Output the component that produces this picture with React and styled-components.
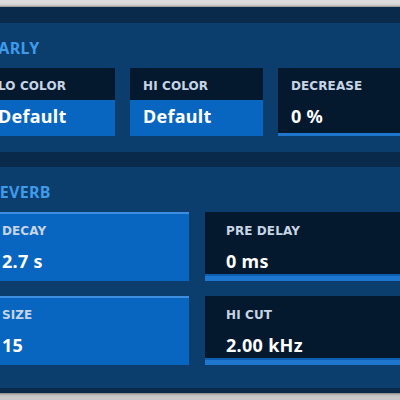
import styled, { createGlobalStyle } from 'styled-components'

const GlobalStyle = createGlobalStyle`
  html, body {
    margin: 0;
    height: 100%;
    overflow: hidden;
    background: linear-gradient(180deg, #dcdcdc 0%, #c9c9c9 100%);
    font-family: "Noto Sans", "DejaVu Sans", sans-serif;
  }
`

const early = [
  { label: 'LO COLOR', value: 'Default', active: true },
  { label: 'HI COLOR', value: 'Default', active: true },
  { label: 'DECREASE', value: '0 %', active: false }
]

const reverb = [
  { label: 'DECAY', value: '2.7 s', active: true },
  { label: 'PRE DELAY', value: '0 ms', active: false },
  { label: 'SIZE', value: '15', active: true },
  { label: 'HI CUT', value: '2.00 kHz', active: false }
]

function App() {
  return (
    <>
      <GlobalStyle />
      <Frame>
        <Section>
          <Heading>EARLY</Heading>
          <EarlyGrid>
            {early.map((p) => (
              <EarlyCard key={p.label}>
                <LabelPart>
                  <Label>{p.label}</Label>
                </LabelPart>
                <ValuePart $active={p.active}>
                  <Value>{p.value}</Value>
                </ValuePart>
              </EarlyCard>
            ))}
          </EarlyGrid>
        </Section>
        <Section $grow>
          <Heading>REVERB</Heading>
          <ReverbGrid>
            {reverb.map((p) => (
              <ReverbCard key={p.label} $active={p.active}>
                <Label>{p.label}</Label>
                <Value>{p.value}</Value>
              </ReverbCard>
            ))}
          </ReverbGrid>
        </Section>
      </Frame>
    </>
  )
}

const Frame = styled.div`
  margin: 7px 0 0 -19px;
  width: 440px;
  height: 386px;
  box-sizing: border-box;
  padding: 16px 0 5px;
  display: flex;
  flex-direction: column;
  gap: 15px;
  background: #0a2a4b;
  box-shadow: 0 0 3px rgba(0, 0, 0, 0.7);
`

const Section = styled.section`
  background: #0b3d6d;
  padding: 15px 0 16px;
  display: flex;
  flex-direction: column;
  gap: 10px;
  flex: ${(props) => (props.$grow ? 1 : 'none')};
`

const Heading = styled.h2`
  margin: 0;
  padding-left: 8px;
  font-size: 16px;
  line-height: 20px;
  font-weight: 700;
  letter-spacing: 0.3px;
  color: #3f9aea;
`

const EarlyGrid = styled.div`
  display: grid;
  grid-template-columns: 130px 133px 1fr;
  column-gap: 15px;
  padding-left: 4px;
`

const EarlyCard = styled.div`
  display: flex;
  flex-direction: column;
  height: 68px;
`

const LabelPart = styled.div`
  height: 32px;
  box-sizing: border-box;
  padding: 10px 13px 0;
  background: #04182e;
`

const ValuePart = styled.div`
  height: 36px;
  box-sizing: border-box;
  padding: 5px 13px 0;
  background: ${(props) => (props.$active ? '#0866c0' : '#04182e')};
  border-bottom: ${(props) => (props.$active ? 'none' : '3px solid #1f76cf')};
`

const ReverbGrid = styled.div`
  display: grid;
  grid-template-columns: 208px 1fr;
  grid-auto-rows: 69px;
  gap: 15px 16px;
`

const ReverbCard = styled.div`
  box-sizing: border-box;
  display: flex;
  flex-direction: column;
  gap: 11px;
  padding: ${(props) => (props.$active ? '9px' : '11px')} 21px 0;
  background: ${(props) => (props.$active ? '#0866c0' : '#04182e')};
  border-top: ${(props) => (props.$active ? '2px solid #3d8ee0' : 'none')};
  border-bottom: ${(props) =>
    props.$active ? 'none' : '5px solid #1f76cf'};
  box-shadow: ${(props) =>
    props.$active ? 'none' : 'inset 0 -2px 0 #0d5fb3'};
`

const Label = styled.div`
  font-family: "DejaVu Sans", "Noto Sans", sans-serif;
  font-size: 12px;
  line-height: 16px;
  font-weight: 700;
  letter-spacing: 0.1px;
  color: #c6d4e4;
  white-space: nowrap;
`

const Value = styled.div`
  font-size: 18px;
  line-height: 22px;
  font-weight: 700;
  letter-spacing: 0.3px;
  color: #ffffff;
  white-space: nowrap;
`

export default App
